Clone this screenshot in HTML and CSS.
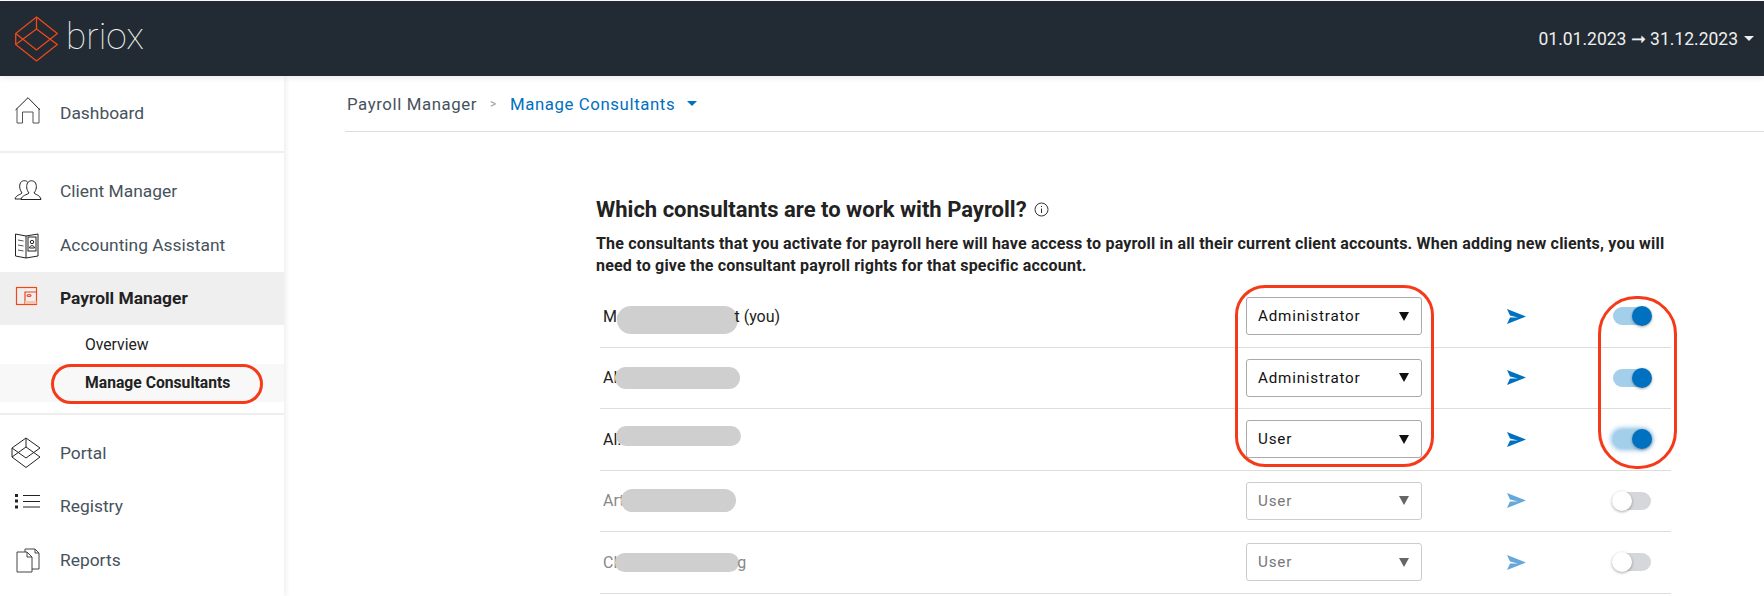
FILE: index.html
```html
<!DOCTYPE html>
<html lang="en">
<head>
<meta charset="UTF-8" />
<title>Manage Consultants</title>
<link rel="stylesheet" href="styles.css">
</head>
<body>
<header class="topbar">
    <div class="logo">
        <svg class="logo-mark" width="43" height="46" viewBox="0 0 43 46" fill="none" stroke="#f0481a" stroke-width="1.3">
            <path d="M21.5 1 L42.3 17.5 L21.5 34 L.7 17.5 Z"/>
            <path d="M21.5 13 L42.3 28.5 L21.5 45 L.7 28.5 Z"/>
            <path d="M21.5 1 V13 M.7 17.5 V28.5"/>
        </svg>
        <span class="logo-word">briox</span>
    </div>
    <div class="period">01.01.2023 ➞ 31.12.2023 <span class="caret"></span></div>
</header>

<div class="layout">
    <!-- sidebar -->
    <nav class="sidebar">
        <div class="nav-group first">
            <a class="nav-item">
                <svg class="icon" width="28" height="32" viewBox="0 0 28 32" fill="none" stroke="#222" stroke-width="1">
                    <path d="M1.5 13 L14 .7 L26 13"/>
                    <path d="M3 11 V26 H8.5 V15 H19 V26 H25 V11" stroke="#555"/>
                </svg>
                Dashboard
            </a>
        </div>
        <div class="nav-group">
            <a class="nav-item">
                <svg class="icon" width="28" height="28" viewBox="0 0 28 28" fill="none" stroke="#222" stroke-width="1">
                    <path d="M1 22 C2 18 6 18 8 16 C6 13 5 10 6 7 C7 3 12 3 13.5 5"/>
                    <path d="M1 22 H7"/>
                    <path d="M7 22.5 C8 18 13 18 15 16 C12.5 13 12 9 13.5 6 C15 3 20 3 21.5 6 C23 9 22.5 13 20 16 C22 18 26 18 27 22.5 Z"/>
                </svg>
                Client Manager
            </a>
            <a class="nav-item">
                <svg class="icon" width="28" height="28" viewBox="0 0 28 28" fill="none" stroke="#222" stroke-width="1">
                    <path d="M1.5 3 L12 5 L24 3 V25 L12 27 L1.5 25 Z"/>
                    <path d="M12 5 V27"/>
                    <path d="M4 9 L9.5 10 M4 14 L9.5 15 M4 19 L9.5 20" stroke="#555"/>
                    <rect x="14" y="6" width="8" height="14"/>
                    <circle cx="18" cy="11" r="1.7"/>
                    <path d="M15.5 17 C15.5 14 20.5 14 20.5 17 Z"/>
                </svg>
                Accounting Assistant
            </a>
            <a class="nav-item active">
                <svg class="icon" width="28" height="28" viewBox="0 0 28 28" fill="none" stroke="#f0481a" stroke-width="1.2">
                    <rect x="2.5" y="3.5" width="20" height="17"/>
                    <path d="M22.5 8 H11 V20.5"/>
                    <ellipse cx="15" cy="11.5" rx="2" ry="1"/>
                    <path d="M11 18.5 H22.5" stroke="#f8c4ae" stroke-width="3"/>
                </svg>
                Payroll Manager
            </a>
            <a class="sub-item">Overview</a>
            <a class="sub-item current">Manage Consultants</a>
        </div>
        <div class="nav-group">
            <a class="nav-item">
                <svg class="icon icon-portal" width="30" height="32" viewBox="0 0 30 32" fill="none" stroke="#222" stroke-width="1">
                    <path d="M15 1 L29 11 L15 21 L1 11 Z"/>
                    <path d="M15 10 L29 20 L15 30.5 L1 20 Z"/>
                    <path d="M15 1 V10 M1 11 V20"/>
                </svg>
                Portal
            </a>
            <a class="nav-item">
                <svg class="icon" width="28" height="28" viewBox="0 0 28 28" fill="none" stroke="#222" stroke-width="1">
                    <path d="M1 3.5 H4 M1 9 H4 M1 15 H4" stroke-width="3"/>
                    <path d="M9 3.5 H26 M9 9.5 H26 M9 15 H26"/>
                </svg>
                Registry
            </a>
            <a class="nav-item">
                <svg class="icon" width="28" height="28" viewBox="0 0 28 28" fill="none" stroke="#444" stroke-width="1">
                    <path d="M3 6 H13 L18 11 V26 H3 Z"/>
                    <path d="M13 6 V11 H18"/>
                    <path d="M11 6 V3 H21 L25 7 V23 H18"/>
                    <path d="M21 3 V7 H25"/>
                </svg>
                Reports
            </a>
        </div>
        <span class="mark mark-nav"></span>
    </nav>

    <!-- main content -->
    <main class="content">
        <div class="breadcrumb">
            <span>Payroll Manager</span>
            <span class="crumb-sep">&gt;</span>
            <span class="crumb-current">Manage Consultants</span>
            <span class="caret blue"></span>
        </div>

        <section class="consultants">
            <h1>Which consultants are to work with Payroll?
                <svg class="info" width="15" height="15" viewBox="0 0 15 15" fill="none" stroke="#333" stroke-width="1">
                    <circle cx="7.5" cy="7.5" r="6.5"/>
                    <path d="M7.5 6.5 V11 M7.5 4 V5"/>
                </svg>
            </h1>
            <p>The consultants that you activate for payroll here will have access to payroll in all their current client accounts. When adding new clients, you will need to give the consultant payroll rights for that specific account.</p>

            <div class="rows">
                <div class="row">
                    <div class="name">Me<span class="blur b1"></span>t (you)</div>
                    <div class="select">Administrator<i></i></div>
                    <svg class="send" width="19" height="15" viewBox="0 0 19 15"><path d="M0 0 L19 7.5 L0 15 L3 8.5 H11 L3 6.5 Z"/></svg>
                    <div class="toggle on"><b></b></div>
                </div>
                <div class="row">
                    <div class="name">Al<span class="blur b2"></span></div>
                    <div class="select">Administrator<i></i></div>
                    <svg class="send" width="19" height="15" viewBox="0 0 19 15"><path d="M0 0 L19 7.5 L0 15 L3 8.5 H11 L3 6.5 Z"/></svg>
                    <div class="toggle on"><b></b></div>
                </div>
                <div class="row">
                    <div class="name">Al.<span class="blur b3"></span></div>
                    <div class="select">User<i></i></div>
                    <svg class="send" width="19" height="15" viewBox="0 0 19 15"><path d="M0 0 L19 7.5 L0 15 L3 8.5 H11 L3 6.5 Z"/></svg>
                    <div class="toggle on focus"><b></b></div>
                </div>
                <div class="row off">
                    <div class="name">Art<span class="blur b4"></span></div>
                    <div class="select">User<i></i></div>
                    <svg class="send" width="19" height="15" viewBox="0 0 19 15"><path d="M0 0 L19 7.5 L0 15 L3 8.5 H11 L3 6.5 Z"/></svg>
                    <div class="toggle"><b></b></div>
                </div>
                <div class="row off">
                    <div class="name">Cl<span class="blur b5"></span>g</div>
                    <div class="select">User<i></i></div>
                    <svg class="send" width="19" height="15" viewBox="0 0 19 15"><path d="M0 0 L19 7.5 L0 15 L3 8.5 H11 L3 6.5 Z"/></svg>
                    <div class="toggle"><b></b></div>
                </div>
                <span class="mark mark-selects"></span>
                <span class="mark mark-toggles"></span>
            </div>
        </section>
    </main>
</div>
</body>
</html>
```

FILE: styles.css
```css
/* ========  GLOBAL  ======== */
*, *::before, *::after { box-sizing: border-box; margin: 0; padding: 0; }
:root {
    --blue: #0070c0;
    --red: #f53a1a;
    --dark: #222b33;
}
html, body { height: 596px; overflow: hidden; }
body {
    font-family: Roboto, "Liberation Sans", sans-serif;
    background: white;
    color: #222;
}

/* ========  TOP BAR  ======== */
.topbar {
    height: 75px;
    margin-top: 1px;
    background: var(--dark);
    display: flex;
    align-items: center;
    justify-content: space-between;
    padding: 0 10px 0 15px;
    position: relative;
    z-index: 2;
    box-shadow: 0 2px 6px rgba(0,0,0,.08);
}
.logo { display: flex; align-items: center; gap: 8px; }
.logo-word {
    font-size: 37px;
    font-weight: 100;
    color: #f2f2f2;
    line-height: 46px;
    margin-top: -4px;
}
.period {
    color: #eee;
    font-size: 17.5px;
    display: flex;
    align-items: center;
    gap: 6px;
}
.caret {
    display: inline-block;
    width: 0;
    height: 0;
    border-left: 5px solid transparent;
    border-right: 5px solid transparent;
    border-top: 5px solid #eee;
}
.caret.blue { border-top-color: var(--blue); margin-left: 2px; }

/* ========  LAYOUT  ======== */
.layout { display: flex; height: 520px; }
.sidebar {
    width: 284px;
    flex: none;
    position: relative;
    box-shadow: 2px 0 5px rgba(0,0,0,.07);
}
.nav-group {
    padding: 12px 0 11px;
    border-bottom: 2px solid #eee;
}
.nav-group.first { padding-top: 10px; padding-bottom: 11px; }
.nav-group:last-of-type { padding-top: 11px; border-bottom: none; }
.nav-item {
    height: 53.5px;
    display: flex;
    align-items: center;
    padding-left: 60px;
    position: relative;
    font-size: 17.4px;
    color: #46525c;
}
.nav-item .icon {
    position: absolute;
    left: 14px;
    top: 50%;
    transform: translateY(-50%);
}
.nav-item .icon-portal { left: 11px; }
.nav-item.active {
    background: #efefef;
    color: #222;
    font-weight: 700;
}
.sub-item {
    height: 38.5px;
    display: flex;
    align-items: center;
    padding-left: 85px;
    font-size: 15.7px;
    color: #222;
}
.sub-item.current { background: #f8f8f8; font-weight: 700; }

/* red hand-drawn marks over the screenshot */
.mark {
    position: absolute;
    border: 3px solid var(--red);
    pointer-events: none;
}
.mark-nav { left: 51px; top: 288px; width: 212px; height: 40px; border-radius: 20px; }
.mark-selects { left: 639px; top: -1px; width: 199px; height: 182px; border-radius: 30px; }
.mark-toggles { left: 1002px; top: 10px; width: 79px; height: 173px; border-radius: 38px; }

/* ========  MAIN  ======== */
.content { flex: 1; padding-left: 61px; }
.breadcrumb {
    height: 56px;
    border-bottom: 1px solid #ddd;
    display: flex;
    align-items: center;
    gap: 10px;
    padding: 0 0 0 2px;
    font-size: 16.8px;
    letter-spacing: .6px;
    color: #46525c;
}
.crumb-sep { color: #999; font-size: 12px; margin: 0 3px; }
.crumb-current { color: var(--blue); }

.consultants { margin-left: 251px; width: 1080px; padding-top: 65px; }
.consultants h1 { font-size: 22px; font-weight: 700; color: #222; line-height: 26px; }
.info { margin-left: 2px; vertical-align: 0; }
.consultants p {
    font-size: 16px;
    letter-spacing: .2px;
    font-weight: 700;
    line-height: 21.5px;
    margin-top: 10px;
    color: #222;
}

/* ========  CONSULTANT ROWS  ======== */
.rows { position: relative; margin-top: 10px; width: 1075px; padding-left: 4px; }
.row {
    height: 61.5px;
    display: flex;
    align-items: center;
    border-bottom: 1px solid #ddd;
    padding-left: 3px;
}
.name { flex: 1; font-size: 16px; color: #222; display: flex; align-items: center; white-space: nowrap; }
.off .name { color: #888; }
.blur {
    display: inline-block;
    border-radius: 14px;
    background: #cfcfcf;
}
.b1 { width: 121px; height: 28px; margin: 7px -4px 0 -8px; }
.b2 { width: 125px; height: 22px; margin-left: -2px; }
.b3 { width: 125px; height: 20px; margin: 0 0 6px -6px; }
.b4 { width: 115px; height: 23px; margin-left: -3px; }
.b5 { width: 124px; height: 19px; margin: 0 -2px 0 -2px; }

.select {
    width: 176px;
    height: 38px;
    flex: none;
    border: 1px solid #aaa;
    border-radius: 3px;
    padding-left: 11px;
    display: flex;
    align-items: center;
    justify-content: space-between;
    font-size: 15.2px;
    letter-spacing: .8px;
    color: #111;
    margin-right: 85px;
    margin-left: 2px;
}
.select i {
    width: 0;
    height: 0;
    margin-right: 12px;
    border-left: 5px solid transparent;
    border-right: 5px solid transparent;
    border-top: 9px solid #111;
}
.off .select { border-color: #ccc; color: #777; }
.off .select i { border-top-color: #666; }

.send { flex: none; fill: var(--blue); margin-right: 87px; }
.off .send { opacity: .6; }

.toggle {
    position: relative;
    width: 38px;
    height: 18px;
    flex: none;
    margin-right: 20px;
    border-radius: 9px;
    background: #d5d7da;
}
.toggle b {
    position: absolute;
    left: -1px;
    top: -1px;
    width: 20px;
    height: 20px;
    border-radius: 50%;
    background: white;
    box-shadow: 0 1px 3px rgba(0,0,0,.35);
}
.toggle.on { background: #a3cfea; }
.toggle.on b { left: 19px; background: var(--blue); }
.toggle.focus { box-shadow: 0 0 5px 2px rgba(0,112,192,.45); }
```
